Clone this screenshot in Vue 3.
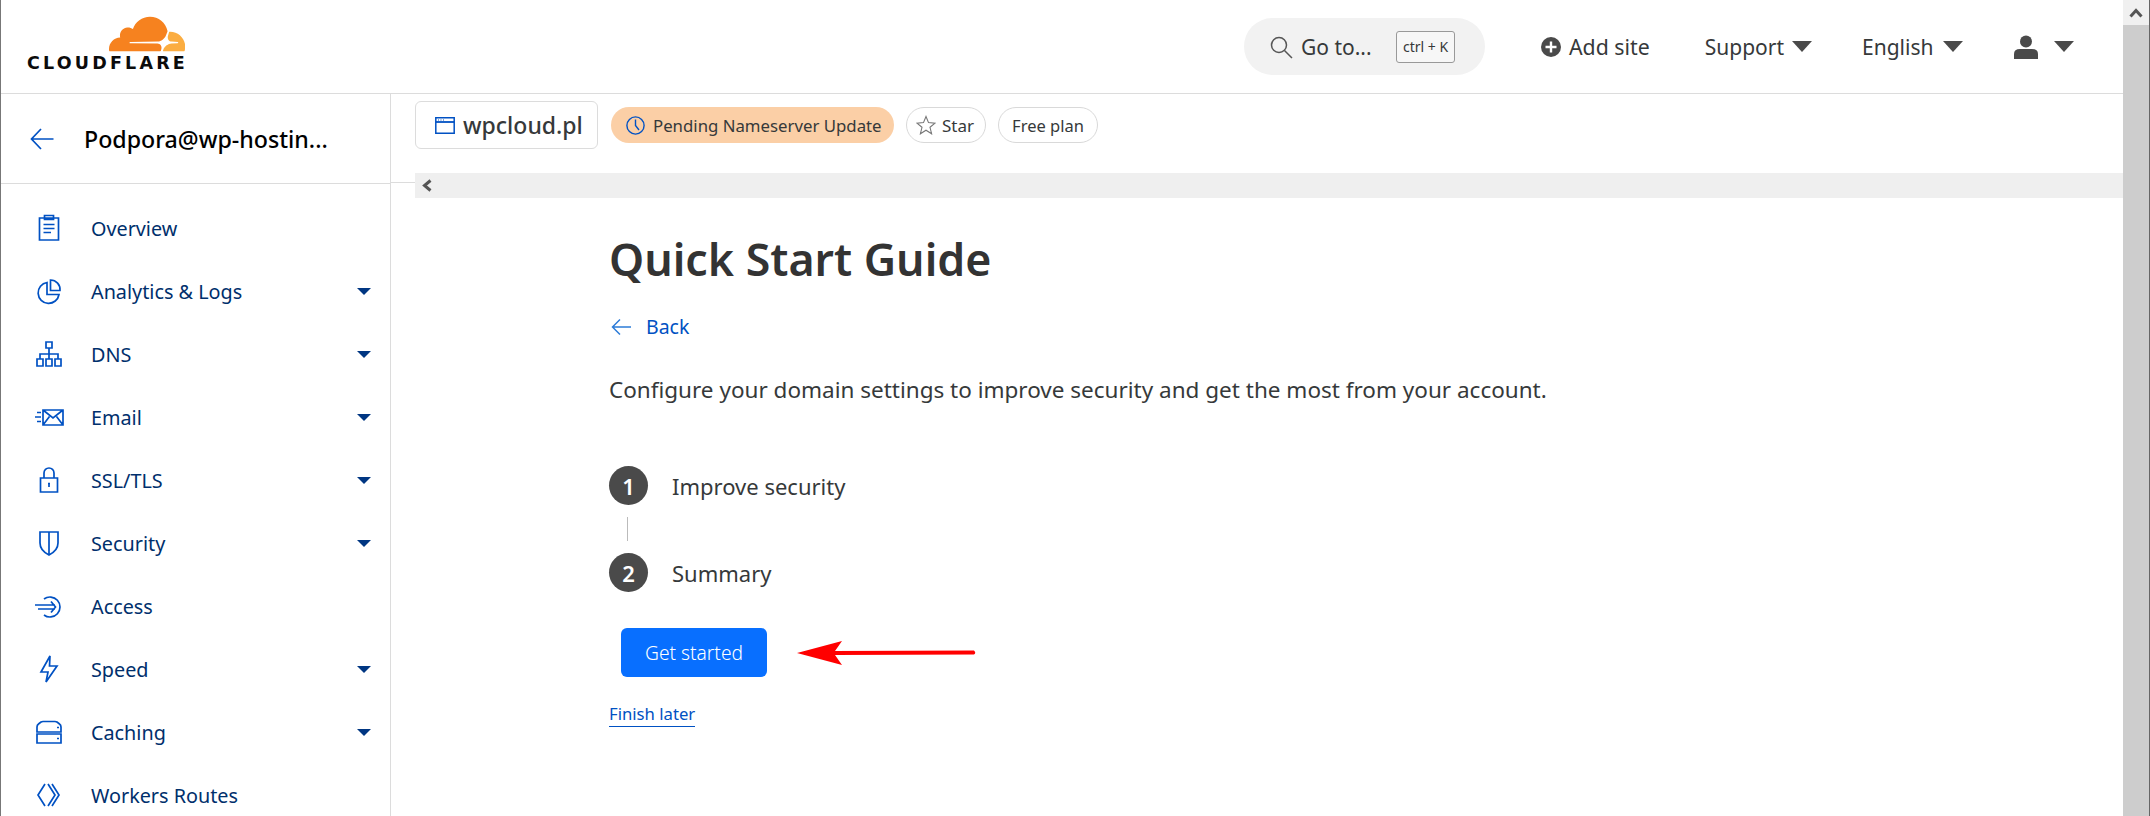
<script setup>
const nav = [
  { label: 'Overview', d: 'M5.5 4H24.5V26H5.5Z M10.5 1.5H19.5V5.5H10.5Z M9.5 10.5H20.5 M9.5 14.5H20.5 M9.5 18.5H17' },
  { label: 'Analytics & Logs', caret: true, d: 'M13 5.5A10.5 10.5 0 1 0 25 17.5H13Z M16.5 3A9.5 9.5 0 0 1 26 13.5H16.5Z' },
  { label: 'DNS', caret: true, d: 'M12 2H18V8H12Z M15 8V19 M6 19V14H24V19 M3 19H9V26H3Z M12 19H18V26H12Z M21 19H27V26H21Z' },
  { label: 'Email', caret: true, d: 'M9 7H29V22H9Z M9 7L19 15L29 7 M9 22L15.5 13.5 M29 22L22.5 13.5 M3 9.5H7 M1 14H7 M3 18.5H7' },
  { label: 'SSL/TLS', caret: true, d: 'M6.5 12H23.5V26H6.5Z M10 12V7A5 5 0 0 1 20 7V12 M15 17.5V21 M14 17.5H16' },
  { label: 'Security', caret: true, d: 'M6 3H24V14C24 20 19 24 15 26C11 24 6 20 6 14Z M15 3V26' },
  { label: 'Access', d: 'M10 7A10 10 0 1 1 10 23 M1 13H21 M4 17H21 M17 9.5L21.5 15L17 20.5' },
  { label: 'Speed', caret: true, d: 'M16 1L7 17H14L12 27L23 11H15.5Z' },
  { label: 'Caching', caret: true, d: 'M3 14V9Q3 7 4.5 6L7 4Q8 3.5 9 3.5H21Q22 3.500 23 4L25.500 6Q27 7 27 9V14Z M3 16H27V25H3Z M23 9.500H25 M23 20.500H25' },
  { label: 'Workers Routes', d: 'M11 3L4 14L11 25 M14 3L21 14L14 25 M18 3L25 14L18 25' }
]
</script>

<template>
  <div class="root">
    <div class="edge"></div>
    <div class="page">
      <header class="top">
        <div class="logo">
          <svg class="cloud" width="76" height="36" viewBox="0 6.4 24 11.2">
            <path fill="#f6821f" d="M16.5088 16.8447c.1475-.5068.0908-.9707-.1553-1.3154-.2246-.3164-.6045-.499-1.0615-.5205l-8.6592-.1123a.1559.1559 0 0 1-.1333-.0713c-.0283-.042-.0351-.0986-.021-.1553.0278-.084.1123-.1484.2036-.1562l8.7359-.1123c1.0351-.0489 2.1601-.8868 2.5537-1.9136l.499-1.3013c.0215-.0561.0293-.1123.0147-.168-.5625-2.5463-2.835-4.4453-5.5499-4.4453-2.5039 0-4.6284 1.6177-5.3876 3.8614-.4927-.3658-1.1187-.5625-1.794-.499-1.2026.119-2.1665 1.083-2.2861 2.2856-.0283.31-.0069.6128.0635.894C1.5683 13.171 0 14.7754 0 16.752c0 .1748.0142.3515.0352.5273.0141.083.0844.1475.1689.1475h15.9814c.0909 0 .1758-.0645.2032-.1553l.12-.4268z"/>
            <path fill="#fbad41" d="M19.3367 11.2775c-.0771 0-.1611 0-.2383.0112-.0566 0-.1054.0415-.127.0976l-.3378 1.1744c-.1475.5068-.0918.9707.1543 1.3164.2256.3164.6055.498 1.0625.5195l1.8437.1133c.0557 0 .1055.0263.1329.0703.0283.043.0351.1074.0214.1562-.0283.084-.1132.1485-.204.1553l-1.921.1123c-1.041.0488-2.1582.8867-2.5527 1.914l-.1406.3585c-.0283.0713.0215.1416.0986.1416h6.5977c.0771 0 .1474-.0489.169-.126.1122-.4082.1757-.837.1757-1.2803 0-2.6025-2.125-4.727-4.7344-4.727"/>
          </svg>
          <span class="wordmark">CLOUDFLARE</span>
        </div>
        <div class="search">
          <svg width="24" height="24" viewBox="0 0 24 24" fill="none" stroke="#555" stroke-width="1.5"><circle cx="10" cy="10" r="7.5"/><path d="M15.5 15.5L23 23"/></svg>
          <span class="goto">Go to...</span>
          <span class="kbd">ctrl + K</span>
        </div>
        <div class="hitem add">
          <svg width="20" height="20" viewBox="0 0 20 20"><circle cx="10" cy="10" r="10" fill="#4a4a4a"/><path d="M10 4.5V15.5M4.5 10H15.5" stroke="#fff" stroke-width="2.4"/></svg>
          <span>Add site</span>
        </div>
        <div class="hitem support"><span>Support</span><i class="tri"></i></div>
        <div class="hitem english"><span>English</span><i class="tri"></i></div>
        <div class="hitem user">
          <svg width="24" height="24" viewBox="0 0 24 24" fill="#4a4a4a"><circle cx="12" cy="6.5" r="6"/><path d="M0 24V19Q0 14 6 14H18Q24 14 24 19V24Z"/></svg>
          <i class="tri"></i>
        </div>
      </header>
      <div class="body">
        <aside class="side">
          <div class="acct">
            <svg width="24" height="22" viewBox="0 0 24 22" fill="none" stroke="#0051c3" stroke-width="1.7"><path d="M23.5 11H1.5M11 1L1.5 11L11 21"/></svg>
            <span class="acct-name">Podpora@wp-hostin...</span>
          </div>
          <nav class="nav">
            <a v-for="item in nav" :key="item.label" class="nav-item">
              <svg class="nav-icon" width="30" height="30" viewBox="0 0 30 30" fill="none" stroke="#0051c3" stroke-width="1.7"><path :d="item.d"/></svg>
              <span class="nav-label">{{ item.label }}</span>
              <i v-if="item.caret" class="caret"></i>
            </a>
          </nav>
        </aside>
        <main class="main">
          <div class="crumbs">
            <div class="domain">
              <svg width="20" height="17" viewBox="0 0 20 17" fill="none" stroke="#0051c3" stroke-width="1.5"><path d="M.8.8H19.2V16.2H.8Z"/><path d="M.8 5H19.2" stroke-width="1.8"/><path d="M3 3H4M5.5 3H6.5M8 3H9" stroke-width="1"/></svg>
              <span>wpcloud.pl</span>
            </div>
            <div class="pill pending">
              <svg class="pill-icon" width="19" height="19" viewBox="0 0 19 19" fill="none" stroke="#0051c3" stroke-width="1.4"><circle cx="9.5" cy="9.5" r="8.6"/><path d="M9.5 3.5V9.5L13 14"/></svg>
              <span>Pending Nameserver Update</span>
            </div>
            <div class="pill plain star">
              <svg class="pill-icon" width="20" height="20" viewBox="0 0 20 20" fill="none" stroke="#777" stroke-width="1.1"><path d="M10 1.5L12.5 7.6L19 8.1L14 12.3L15.6 18.7L10 15.2L4.4 18.7L6 12.3L1 8.1L7.5 7.6Z"/></svg>
              <span>Star</span>
            </div>
            <div class="pill plain plan"><span>Free plan</span></div>
          </div>
          <div class="strip">
            <svg width="12" height="13" viewBox="0 0 12 13" fill="none" stroke="#555" stroke-width="3"><path d="M9.5 1.5L3.5 6.5L9.5 11.5"/></svg>
          </div>
          <section class="guide">
            <h1>Quick Start Guide</h1>
            <a class="back">
              <svg width="20" height="18" viewBox="0 0 20 18" fill="none" stroke="#2c7cd8" stroke-width="1.5"><path d="M20 9H1.5M9 1.5L1.5 9L9 16.5"/></svg>
              <span>Back</span>
            </a>
            <p class="desc">Configure your domain settings to improve security and get the most from your account.</p>
            <div class="step"><span class="num">1</span><span class="step-label">Improve security</span></div>
            <div class="link-line"></div>
            <div class="step"><span class="num">2</span><span class="step-label">Summary</span></div>
            <div class="cta">
              <button class="btn">Get started</button>
              <svg class="annot" width="180" height="26" viewBox="0 0 180 26"><path d="M0 13L45 1L38 11L177 10.5Q179.500 13 177 14.500L38 15L45 25Z" fill="#f00"/></svg>
            </div>
            <a class="later">Finish later</a>
          </section>
        </main>
      </div>
    </div>
    <div class="scroll"><div class="sb-up"><svg width="14" height="10" viewBox="0 0 14 10" fill="none" stroke="#555" stroke-width="3"><path d="M1.500 8.500L7 2.500L12.500 8.500"/></svg></div><div class="sb-thumb"></div></div>
  </div>
</template>

<style>
html, body { margin: 0; background: #fff; }
</style>

<style scoped>
.root { width: 2150px; height: 816px; display: flex; overflow: hidden; background: #fff; font-family: "Noto Sans", "Open Sans", sans-serif; color: #36393a; }
.edge { width: 1px; background: #777; flex: none; }
.page { flex: 1; min-width: 0; display: flex; flex-direction: column; }
.scroll { width: 27px; flex: none; display: flex; flex-direction: column; border-right: 1px solid #666; box-sizing: border-box; }
.sb-up { height: 25px; background: #f0f0f0; display: flex; align-items: center; justify-content: center; }
.sb-thumb { flex: 1; background: #cdcdcd; }

.top { height: 93px; flex: none; box-sizing: content-box; border-bottom: 1px solid #dcdcdc; display: flex; align-items: center; }
.logo { margin-left: 26px; width: 158px; display: flex; flex-direction: column; align-items: flex-end; align-self: flex-start; padding-top: 16px; }
.cloud { display: block; }
.wordmark { font-family: "DejaVu Sans", sans-serif; font-weight: 700; font-size: 17.5px; line-height: 17px; letter-spacing: 3.2px; margin-right: -3px; margin-top: 3px; color: #0b0b0b; white-space: nowrap; }
.search { margin-left: 1059px; width: 241px; height: 57px; border-radius: 29px; background: #f2f2f2; display: flex; align-items: center; padding-left: 25px; box-sizing: border-box; }
.goto { margin-left: 8px; font-size: 21px; color: #36393a; width: 95px; white-space: nowrap; }
.kbd { width: 59px; height: 32px; box-sizing: border-box; border: 1px solid #999; border-radius: 3px; background: #f7f7f7; font-size: 14px; display: flex; align-items: center; justify-content: center; white-space: nowrap; }
.hitem { display: flex; align-items: center; font-size: 21px; color: #36393a; white-space: nowrap; }
.add { margin-left: 56px; gap: 8px; font-size: 21.3px; }
.support { margin-left: 55px; gap: 8px; }
.english { margin-left: 50px; gap: 9px; }
.user { margin-left: 51px; gap: 16px; }
.tri { display: block; width: 0; height: 0; border-left: 10px solid transparent; border-right: 10px solid transparent; border-top: 11px solid #4a4a4a; }

.body { flex: 1; min-height: 0; display: flex; }
.side { width: 389px; flex: none; box-sizing: content-box; border-right: 1px solid #dcdcdc; }
.acct { height: 89px; border-bottom: 1px solid #dcdcdc; display: flex; align-items: center; padding-left: 29px; gap: 30px; }
.acct-name { font-size: 23.2px; font-weight: 500; color: #000; white-space: nowrap; }
.nav { padding-top: 13px; }
.nav-item { height: 63px; display: flex; align-items: center; position: relative; padding-left: 33px; }
.nav-icon { flex: none; }
.nav-label { margin-left: 27px; font-size: 19.8px; color: #002f6c; white-space: nowrap; }
.caret { position: absolute; left: 356px; top: 28px; width: 0; height: 0; border-left: 7px solid transparent; border-right: 7px solid transparent; border-top: 7px solid #003682; }

.main { flex: 1; min-width: 0; padding-left: 24px; }
.crumbs { display: flex; align-items: center; height: 48px; margin-top: 7px; gap: 12px; }
.domain { width: 183px; height: 48px; box-sizing: border-box; border: 1px solid #dcdcdc; border-radius: 6px; display: flex; align-items: center; padding-left: 19px; gap: 8px; font-size: 23px; font-weight: 500; margin-right: 1px; white-space: nowrap; }
.pill { height: 36px; border-radius: 18px; box-sizing: border-box; display: flex; align-items: center; font-size: 17px; white-space: nowrap; }
.pill-icon { flex: none; }
.pending { width: 283px; background: #fbcfa6; padding-left: 15px; gap: 8px; font-size: 16.8px; }
.plain { border: 1px solid #d9d9d9; }
.star { width: 80px; padding-left: 9px; gap: 6px; }
.plan { width: 100px; justify-content: center; font-size: 16.5px; }
.strip { position: relative; height: 25px; background: #efefef; margin-top: 24px; display: flex; align-items: center; padding-left: 6px; }
.strip::before { content: ""; position: absolute; left: -24px; top: 9px; width: 24px; height: 1px; background: #dcdcdc; }

.guide { padding-left: 194px; color: #36393a; }
h1 { margin: 31px 0 0; font-size: 44.7px; line-height: 60px; font-weight: 600; color: #333; white-space: nowrap; }
.back { display: flex; align-items: center; gap: 15px; margin: 24px 0 0 2px; font-size: 19.5px; line-height: 28px; color: #0051c3; }
.desc { margin: 34px 0 0; font-size: 22.5px; line-height: 30px; white-space: nowrap; }
.step { display: flex; align-items: center; height: 39px; gap: 24px; }
.desc + .step { margin-top: 61px; }
.num { width: 39px; height: 39px; border-radius: 50%; background: #4a4a4a; color: #fff; font-size: 22px; font-weight: 600; display: flex; align-items: center; justify-content: center; }
.step-label { font-size: 22px; }
.link-line { width: 1px; height: 24px; background: #bbb; margin: 12px 0 12px 18px; }
.cta { position: relative; margin: 36px 0 0 12px; }
.btn { display: block; width: 146px; height: 49px; border: 0; border-radius: 6px; background: #086fff; color: #fff; font-family: inherit; font-size: 19.2px; padding: 0; font-weight: 300; }
.annot { position: absolute; left: 176px; top: 12px; }
.later { display: inline-block; margin-top: 25px; font-size: 16.7px; line-height: 24px; color: #0051c3; border-bottom: 1px solid #0051c3; }
</style>
